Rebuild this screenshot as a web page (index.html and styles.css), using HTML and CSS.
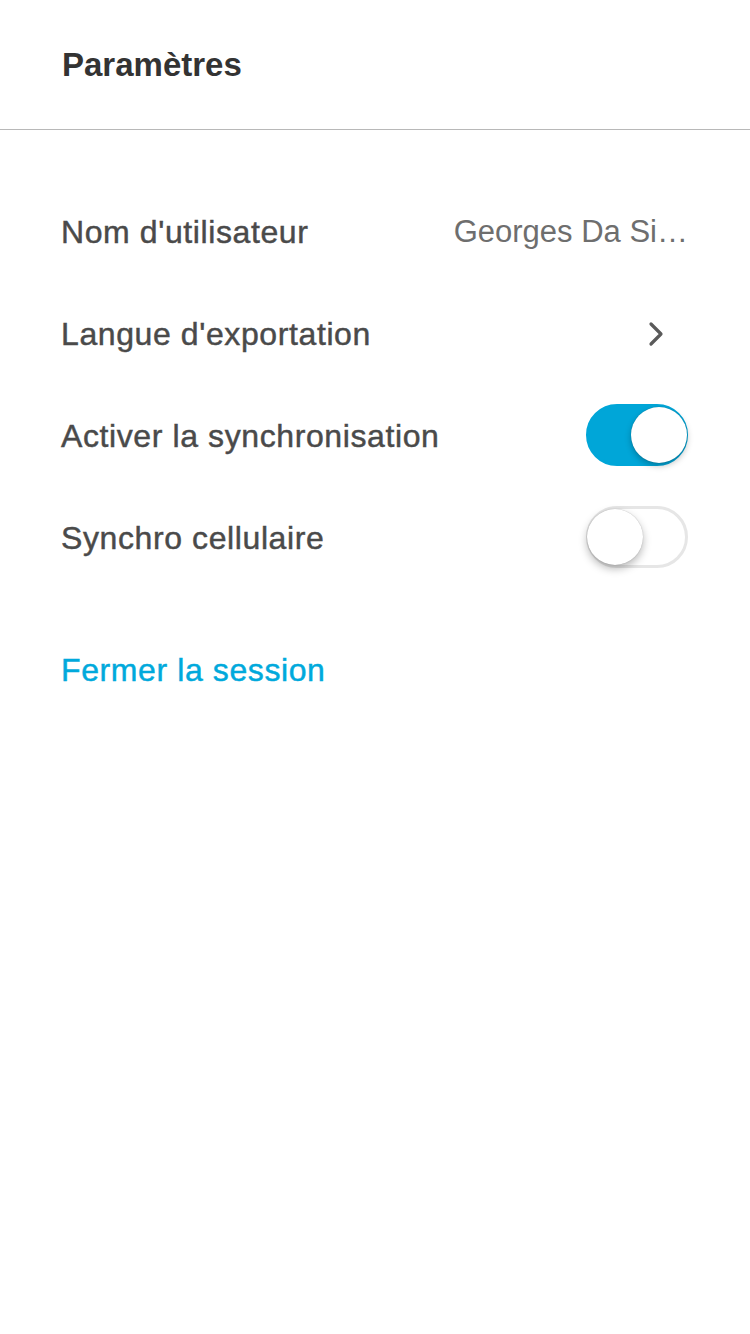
FILE: index.html
```html
<!DOCTYPE html>
<html lang="fr">
<head>
<meta charset="utf-8">
<title>Paramètres</title>
<link rel="stylesheet" href="styles.css">
</head>
<body>
<header class="header">
  <h1 class="title">Paramètres</h1>
</header>
<main class="settings">
  <div class="row">
    <span class="label">Nom d'utilisateur</span>
    <span class="value">Georges Da Si…</span>
  </div>
  <div class="row">
    <span class="label">Langue d'exportation</span>
    <svg class="chevron" width="16" height="26" viewBox="0 0 16 26"><path d="M3 3 L13 13 L3 23" fill="none" stroke="#5a5a5a" stroke-width="3.2" stroke-linecap="round" stroke-linejoin="round"/></svg>
  </div>
  <div class="row">
    <span class="label">Activer la synchronisation</span>
    <span class="toggle on"><span class="knob"></span></span>
  </div>
  <div class="row">
    <span class="label">Synchro cellulaire</span>
    <span class="toggle"><span class="knob"></span></span>
  </div>
  <div class="row logout">
    <span class="label link">Fermer la session</span>
  </div>
</main>
</body>
</html>
```
FILE: styles.css
```css
html, body {
  margin: 0;
  padding: 0;
  background: #ffffff;
}
body {
  width: 750px;
  height: 1334px;
  font-family: "Liberation Sans", Arial, sans-serif;
  color: #4a4a4a;
}
.header {
  height: 130px;
  border-bottom: 1px solid #b8b8b8;
  display: flex;
  align-items: center;
  padding-left: 62px;
  box-sizing: border-box;
}
.title {
  margin: 0;
  font-size: 33px;
  font-weight: 700;
  color: #333333;
}
.settings {
  padding-top: 51px;
}
.row {
  height: 102px;
  display: flex;
  align-items: center;
  justify-content: space-between;
  padding: 0 62px 0 61px;
}
.label {
  font-size: 32px;
  letter-spacing: 0.6px;
  -webkit-text-stroke: 0.45px currentColor;
  color: #4a4a4a;
}
.value {
  font-size: 31px;
  color: #6e6e6e;
}
.chevron {
  margin-right: 24px;
}
.toggle {
  width: 102px;
  height: 62px;
  border-radius: 31px;
  box-sizing: border-box;
  border: 3px solid #e6e6e6;
  background: #ffffff;
  display: flex;
  align-items: center;
  margin-top: -2px;
}
.toggle .knob {
  width: 56px;
  height: 56px;
  border-radius: 50%;
  background: #ffffff;
  box-shadow: 0 4px 8px rgba(0,0,0,0.28), 0 0 1px rgba(0,0,0,0.3);
  margin-left: -2px;
}
.toggle.on {
  background: #00a6d8;
  border-color: #00a6d8;
  justify-content: flex-end;
}
.toggle.on .knob {
  margin-left: 0;
  margin-right: -2px;
  box-shadow: 0 3px 6px rgba(0,0,0,0.25), 0 0 1px rgba(0,0,0,0.3);
}
.logout {
  margin-top: 30px;
}
.label.link {
  color: #00a9dc;
}
```
